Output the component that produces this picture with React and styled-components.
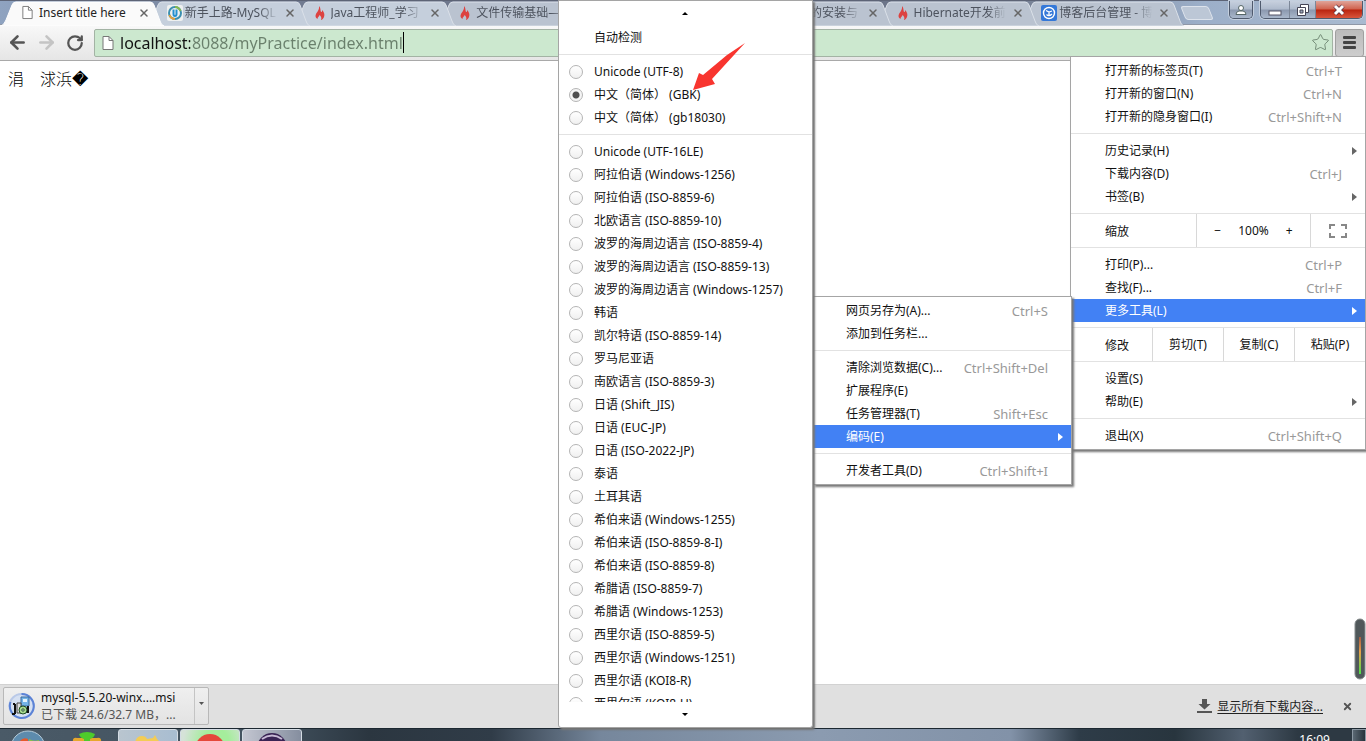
import { useState } from "react";
import styled, { createGlobalStyle, css } from "styled-components";
import { ArrowLeft, ArrowRight, RotateCw, Star, X } from "lucide-react";

const GlobalStyle = createGlobalStyle`
    * {
        box-sizing: border-box;
    }
    body {
        margin: 0;
        overflow: hidden;
        font-family: "Noto Sans", "Noto Sans CJK SC", sans-serif;
        font-size: 12px;
        color: #111;
    }
    button, input {
        font: inherit;
        color: inherit;
    }
`;

const Desktop = styled.div`
    position: relative;
    display: flex;
    flex-direction: column;
    height: 100vh;
    overflow: hidden;
    background: #fff;
`;

/* tab strip */
const TabStrip = styled.header`
    display: flex;
    flex: none;
    height: 25px;
    border-top: 1px solid #5d6476;
    border-bottom: 1px solid #8f97a6;
    background: linear-gradient(90deg, #8fa3c0, #727c92 20%, #666e82 60%, #7c879b 78%, #9cafc9 88%, #a9bad0);
`;
const Tabs = styled.nav`
    display: flex;
    flex: 0 1 1166px;
    min-width: 0;
`;
const Tab = styled.div`
    position: relative;
    z-index: ${({ $order }) => 10 - $order};
    display: flex;
    flex: 1 1 0;
    align-items: center;
    min-width: 0;
    padding-left: 21px;
`;
const TabShape = styled.svg`
    position: absolute;
    left: 0;
    top: 0;
    width: 164px;
    height: 25px;
    z-index: -1;
`;
const TabIcon = styled.span`
    display: flex;
    flex: none;
    width: 18px;
`;
const TabTitle = styled.a`
    flex: 1;
    overflow: hidden;
    white-space: nowrap;
    line-height: 24px;
    color: ${({ $active }) => ($active ? "#222" : "#4d535e")};
    text-decoration: none;
    mask-image: ${({ $active }) => ($active ? "none" : "linear-gradient(90deg, #000 80%, transparent)")};
`;
const IconButton = styled.button`
    display: flex;
    flex: none;
    align-items: center;
    justify-content: center;
    width: 24px;
    height: 24px;
    padding: 0;
    border: 0;
    background: transparent;
    color: ${({ $color }) => $color || "#555"};
`;
const CloseTab = styled(IconButton)`
    width: 14px;
    margin: 0 -5px 0 5px;
`;
const NewTab = styled.button`
    width: 28px;
    height: 14px;
    margin: 5px 0 0 17px;
    padding: 0;
    border: 1px solid #dde3ec;
    border-radius: 3px;
    background: #bcc7d6;
    transform: skewX(22deg);
`;
const WindowControls = styled.div`
    display: flex;
    height: 18px;
    margin-left: auto;
    padding-right: 3px;
`;
const ControlGroup = styled.div`
    display: flex;
    margin-left: 7px;
    overflow: hidden;
    border: 1px solid #4f5a6d;
    border-top: 0;
    border-radius: 0 0 5px 5px;
    box-shadow: 0 0 0 1px #c4cfde;
`;
const Control = styled.button`
    display: flex;
    align-items: center;
    justify-content: center;
    width: ${({ $width }) => $width}px;
    height: 17px;
    padding: 0;
    border: 0;
    border-left: 1px solid #7c8798;
    background: ${({ $danger }) =>
        $danger
            ? "linear-gradient(#e0a499, #d0614d 48%, #b9240f 52%, #d9553c)"
            : "linear-gradient(#c7d0de, #aebacc 48%, #8b98ae 52%, #a9b7cb)"};

    &:first-child {
        border-left: 0;
    }
`;

/* toolbar */
const Toolbar = styled.form`
    display: flex;
    flex: none;
    align-items: center;
    height: 36px;
    padding: 0 2px 0 5px;
    border-bottom: 1px solid #a9a9a9;
    background: linear-gradient(#f8f8f8, #e6e6e6);
`;
const NavButtons = styled.div`
    display: flex;
    gap: 5px;
    width: 89px;
`;
const Omnibox = styled.div`
    display: flex;
    flex: 1;
    align-items: center;
    height: 28px;
    padding: 0 0 0 6px;
    border: 1px solid #a3b3a4;
    border-radius: 2px;
    background: #cce8cf;
`;
const UrlInput = styled.input`
    field-sizing: content;
    margin-left: 5px;
    padding: 0;
    border: 0;
    outline: 0;
    font-size: 16px;
    line-height: 24px;
    background: linear-gradient(90deg, #111 70px, #6a806c 70px);
    background-clip: text;
    -webkit-text-fill-color: transparent;
`;
const Caret = styled.span`
    width: 1px;
    height: 21px;
    margin-right: auto;
    background: #000;
`;
const MenuButton = styled.button`
    display: flex;
    flex-direction: column;
    align-items: center;
    justify-content: center;
    gap: 2px;
    width: 29px;
    height: 28px;
    margin-left: 2px;
    padding: 0;
    border: 1px solid #a0a0a0;
    border-radius: 3px;
    background: linear-gradient(#bcbcbc, #cdcdcd);
`;
const MenuBar = styled.span`
    width: 13px;
    height: 3px;
    border-radius: 1px;
    background: #444;
`;

const Page = styled.main`
    flex: 1;
    padding: 5px 8px;
    font-family: "Noto Sans CJK SC", "DejaVu Sans", sans-serif;
    font-size: 16px;
    font-weight: 300;
    line-height: 24px;
    color: #000;
`;

/* downloads */
const DownloadBar = styled.footer`
    display: flex;
    flex: none;
    align-items: center;
    height: 44px;
    padding: 0 7px 1px 3px;
    border-top: 1px solid #d2d2d2;
    background: #e0e0e0;
`;
const DownloadItem = styled.div`
    display: flex;
    width: 206px;
    height: 38px;
    border: 1px solid #b8b8b8;
    border-radius: 2px;
    background: linear-gradient(#efefef, #e3e3e3);
`;
const DownloadFile = styled.button`
    display: flex;
    flex: 1;
    align-items: center;
    gap: 6px;
    padding: 0 0 0 4px;
    border: 0;
    background: transparent;
    text-align: left;
    line-height: 17px;
    white-space: nowrap;
`;
const DownloadStatus = styled.span`
    display: block;
    color: #555;
`;
const DownloadArrow = styled.button`
    width: 14px;
    padding: 0 0 12px;
    border: 0;
    border-left: 1px solid #c4c4c4;
    background: transparent;
`;
const ShowAll = styled.a`
    display: flex;
    align-items: center;
    gap: 5px;
    margin: 0 12px 0 auto;
    color: #222;
    text-underline-offset: 2px;
`;

/* taskbar */
const Taskbar = styled.div`
    display: flex;
    flex: none;
    height: 13px;
    overflow: hidden;
    border-top: 1px solid #1c2831;
    background: linear-gradient(90deg, #4a5a67, #42525f 20%, #2b3640 27%, #303c48 36%, #76879c 44%, #8b9bb0 60%, #8292a8 74%, #2e3c48 79%, #28353e 86%, #526070 91%, #2d3943 95%);
`;
const Task = styled.button`
    display: flex;
    align-items: flex-start;
    justify-content: center;
    width: ${({ $width }) => $width || 60}px;
    height: 40px;
    margin-right: 2px;
    padding: 0;
    border: ${({ $tint }) => ($tint ? "1px solid #d4dce4" : "0")};
    border-radius: 3px;
    background: ${({ $tint }) => $tint || "transparent"};
`;
const Clock = styled.time`
    margin: 2px 22px 0 auto;
    line-height: 17px;
    color: #fff;
`;
const ShowDesktop = styled.button`
    width: 14px;
    height: 40px;
    padding: 0;
    border: 1px solid #8b98a3;
    background: linear-gradient(90deg, #5a6873, #27323b);
`;
const Meter = styled.svg`
    position: absolute;
    right: 0;
    bottom: 61px;
`;

/* menus */
const Menu = styled.div`
    position: absolute;
    z-index: 20;
    right: ${({ $right }) => $right}px;
    top: ${({ $top }) => $top}px;
    width: ${({ $width }) => $width}px;
    padding: 2px 0;
    border: 1px solid #a5a5a5;
    background: #fff;
    box-shadow: 2px 2px 2px #777;
`;
const Separator = styled.hr`
    height: 1px;
    margin: 5px 0;
    border: 0;
    background: #e2e2e2;
`;
const rowStyle = css`
    display: flex;
    align-items: center;
    width: 100%;
    height: 23px;
    line-height: 22px;
    white-space: nowrap;
`;
const Item = styled.button`
    ${rowStyle}
    padding: 1px ${({ $arrow }) => ($arrow ? 8 : 23)}px 0 ${({ $indent }) => $indent}px;
    border: 0;
    background: ${({ $selected }) => ($selected ? "#4281f4" : "transparent")};
    color: ${({ $selected }) => ($selected ? "#fff" : "#111")};
    text-align: left;
`;
const Shortcut = styled.kbd`
    margin-left: auto;
    font-family: inherit;
    font-size: 13px;
    color: #999;
`;
const ArrowIcon = styled.svg`
    margin-left: auto;
`;
const SplitRow = styled.div`
    display: flex;
    align-items: stretch;
    height: 35px;
    margin: 5px 0;
    border-top: 1px solid #e2e2e2;
    border-bottom: 1px solid #e2e2e2;
    line-height: 35px;
`;
const SplitLabel = styled.span`
    flex: 1;
    padding-left: 34px;
`;
const SplitCell = styled.div`
    display: flex;
    align-items: center;
    justify-content: center;
    gap: 13px;
    width: ${({ $width }) => $width}px;
    border-left: 1px solid #d8d8d8;
`;
const SplitButton = styled.button`
    display: flex;
    padding: 0 4px;
    border: 0;
    background: transparent;
`;

const EncodingMenu = styled(Menu)`
    bottom: 13px;
    display: flex;
    flex-direction: column;
    padding: 0;
    border-radius: 0 0 3px 3px;
`;
const EncodingList = styled.div`
    flex: 1;
    min-height: 0;
    overflow: hidden;
`;
const ScrollButton = styled.button`
    flex: none;
    height: 25px;
    padding: 0 2px 2px 0;
    border: 0;
    background: transparent;
    line-height: 0;
`;
const EncodingRow = styled.label`
    ${rowStyle}
    gap: 11px;
    padding: 1px 0 0 10px;
`;
const Radio = styled.input`
    appearance: none;
    width: 14px;
    height: 14px;
    margin: 0;
    border: 1px solid #b5b5b5;
    border-radius: 50%;
    background: linear-gradient(#fff, #f0f0f0);

    &:checked {
        background: radial-gradient(circle, #4f4f4f 3px, #f4f4f4 4px);
    }
`;
const Pointer = styled.svg`
    position: absolute;
    z-index: 30;
    top: 42px;
    right: 620px;
`;

const tabs = [
    { title: "Insert title here", icon: "page" },
    { title: "新手上路-MySQL", icon: "ring" },
    { title: "Java工程师_学习", icon: "flame" },
    { title: "文件传输基础—", icon: "flame" },
    { title: "", icon: "flame" },
    { title: "MySQL 的安装与", icon: "flame" },
    { title: "Hibernate开发前", icon: "flame" },
    { title: "博客后台管理 - 博", icon: "blog" },
];

const mainMenu = [
    { label: "打开新的标签页(T)", keys: "Ctrl+T" },
    { label: "打开新的窗口(N)", keys: "Ctrl+N" },
    { label: "打开新的隐身窗口(I)", keys: "Ctrl+Shift+N" },
    "-",
    { label: "历史记录(H)", arrow: true },
    { label: "下载内容(D)", keys: "Ctrl+J" },
    { label: "书签(B)", arrow: true },
    "zoom",
    { label: "打印(P)...", keys: "Ctrl+P" },
    { label: "查找(F)...", keys: "Ctrl+F" },
    { label: "更多工具(L)", arrow: true, selected: true },
    "edit",
    { label: "设置(S)" },
    { label: "帮助(E)", arrow: true },
    "-",
    { label: "退出(X)", keys: "Ctrl+Shift+Q" },
];

const toolsMenu = [
    { label: "网页另存为(A)...", keys: "Ctrl+S" },
    { label: "添加到任务栏..." },
    "-",
    { label: "清除浏览数据(C)...", keys: "Ctrl+Shift+Del" },
    { label: "扩展程序(E)" },
    { label: "任务管理器(T)", keys: "Shift+Esc" },
    { label: "编码(E)", arrow: true, selected: true },
    "-",
    { label: "开发者工具(D)", keys: "Ctrl+Shift+I" },
];

const recentEncodings = ["Unicode (UTF-8)", "中文（简体） (GBK)", "中文（简体） (gb18030)"];
const encodings = [
    "Unicode (UTF-16LE)",
    "阿拉伯语 (Windows-1256)",
    "阿拉伯语 (ISO-8859-6)",
    "北欧语言 (ISO-8859-10)",
    "波罗的海周边语言 (ISO-8859-4)",
    "波罗的海周边语言 (ISO-8859-13)",
    "波罗的海周边语言 (Windows-1257)",
    "韩语",
    "凯尔特语 (ISO-8859-14)",
    "罗马尼亚语",
    "南欧语言 (ISO-8859-3)",
    "日语 (Shift_JIS)",
    "日语 (EUC-JP)",
    "日语 (ISO-2022-JP)",
    "泰语",
    "土耳其语",
    "希伯来语 (Windows-1255)",
    "希伯来语 (ISO-8859-8-I)",
    "希伯来语 (ISO-8859-8)",
    "希腊语 (ISO-8859-7)",
    "希腊语 (Windows-1253)",
    "西里尔语 (ISO-8859-5)",
    "西里尔语 (Windows-1251)",
    "西里尔语 (KOI8-R)",
    "西里尔语 (KOI8-U)",
];

const PageIcon = ({ size = 14 }) => (
    <svg width={size} height={size + 2} viewBox="0 0 14 16">
        <path d="M2 1.5h6l4 4v9H2z" fill="#fff" stroke="#777" />
        <path d="M8 1.5v4h4" fill="none" stroke="#777" />
    </svg>
);

const Favicon = ({ name }) => {
    switch (name) {
        case "page":
            return <PageIcon size={13} />;
        case "ring":
            return (
                <svg width="16" height="16" viewBox="0 0 16 16">
                    <rect width="16" height="16" rx="2" fill="#eef0f0" />
                    <circle cx="8" cy="8" r="6" fill="none" stroke="#3b8fb0" strokeWidth="2" />
                    <path d="M2.5 10a6 6 0 0 0 5.5 4" fill="none" stroke="#e8a13a" strokeWidth="2" />
                    <path d="M13.5 6A6 6 0 0 0 8 2" fill="none" stroke="#86b94f" strokeWidth="2" />
                    <path d="M6.5 4.5v4.5q0 2 1.5 2t1.5-2V4.5" fill="none" stroke="#2490d0" strokeWidth="2" />
                </svg>
            );
        case "blog":
            return (
                <svg width="16" height="16" viewBox="0 0 16 16">
                    <rect width="16" height="16" rx="2" fill="#3478d8" />
                    <circle cx="8" cy="8" r="5.5" fill="none" stroke="#fff" strokeWidth="1.4" />
                    <path d="M5 5.5 8 7l3-1M8 7v4M5.5 9.500q2.5 2.5 5.5-.5" fill="none" stroke="#fff" strokeWidth="1.3" />
                </svg>
            );
        default:
            return (
                <svg width="14" height="16" viewBox="0 0 14 16">
                    <path d="M6 1c2 2 1 4 2 6 1 .5 1-1 1-2 2 2 3 4 2 7-.5 1.5-2 3-3 3 1-2 0-4-1.5-5-.5 2-2 2-2 4-2-1-2.5-3-1.500-5S6.500 5 6 1z" fill="#dd4240" />
                </svg>
            );
    }
};

const MenuItems = ({ items, indent }) =>
    items.map((item, index) => {
        switch (item) {
            case "-":
                return <Separator key={index} />;
            case "zoom":
                return (
                    <SplitRow key={index}>
                        <SplitLabel>缩放</SplitLabel>
                        <SplitCell $width={114}>
                            <SplitButton>−</SplitButton>
                            <span>100%</span>
                            <SplitButton>+</SplitButton>
                        </SplitCell>
                        <SplitCell $width={55}>
                            <SplitButton aria-label="全屏">
                                <svg width="18" height="14" viewBox="0 0 18 14">
                                    <path d="M1 5V1h5M12 1h5v4M17 9v4h-5M6 13H1V9" fill="none" stroke="#888" strokeWidth="2" />
                                </svg>
                            </SplitButton>
                        </SplitCell>
                    </SplitRow>
                );
            case "edit":
                return (
                    <SplitRow key={index}>
                        <SplitLabel>修改</SplitLabel>
                        {["剪切(T)", "复制(C)", "粘贴(P)"].map(label => <SplitCell key={label} $width={71}>
                            <SplitButton>{label}</SplitButton>
                        </SplitCell>)}
                    </SplitRow>
                );
            default:
                return (
                    <Item key={index} $indent={indent} $selected={item.selected} $arrow={item.arrow}>
                        {item.label}
                        {item.keys && <Shortcut>{item.keys}</Shortcut>}
                        {item.arrow && <ArrowIcon width="5" height="8" viewBox="0 0 5 8">
                            <path d="M0 0l5 4-5 4z" fill={item.selected ? "#fff" : "#666"} />
                        </ArrowIcon>}
                    </Item>
                );
        }
    });

export default () => {
    const [encoding, setEncoding] = useState("中文（简体） (GBK)");
    const [url, setUrl] = useState("localhost:8088/myPractice/index.html");

    const renderEncoding = name => (
        <EncodingRow key={name}>
            <Radio type="radio" name="encoding" checked={encoding === name} onChange={() => setEncoding(name)} />
            {name}
        </EncodingRow>
    );

    return (
        <Desktop>
            <GlobalStyle />
            <TabStrip>
                <Tabs>
                    {tabs.map((tab, index) => <Tab key={index} $order={index}>
                        <TabShape viewBox="0 0 164 25">
                            <path
                                d="M1 25Q4 24 6 19L12 4Q13 1 16 1H150Q153 1 154 4L160 20Q161 24 164 25z"
                                fill={index === 0 ? "#fafafa" : index < 3 ? "#c5cfdc" : "#bac3d0"}
                                stroke={index === 0 ? "#fff" : "#dbe1e9"}
                            />
                        </TabShape>
                        <TabIcon><Favicon name={tab.icon} /></TabIcon>
                        <TabTitle href="#" $active={index === 0}>{tab.title}</TabTitle>
                        <CloseTab aria-label="关闭标签页" $color="#666"><X size={12} strokeWidth={3} /></CloseTab>
                    </Tab>)}
                </Tabs>
                <NewTab aria-label="新标签页" />
                <WindowControls>
                    <ControlGroup>
                        <Control $width={22} aria-label="用户">
                            <svg width="12" height="12" viewBox="0 0 12 12">
                                <circle cx="6" cy="4" r="2.5" fill="#fff" stroke="#566" />
                                <path d="M1 10.5q0-3 3-3.5h4q3 .5 3 3.5z" fill="#fff" stroke="#566" />
                            </svg>
                        </Control>
                    </ControlGroup>
                    <ControlGroup>
                        <Control $width={28} aria-label="最小化">
                            <svg width="14" height="14" viewBox="0 0 14 14"><rect x="1" y="8" width="12" height="4" fill="#fff" stroke="#556" /></svg>
                        </Control>
                        <Control $width={26} aria-label="还原">
                            <svg width="14" height="14" viewBox="0 0 14 14">
                                <path d="M4.5 1.5h8v8h-8z" fill="#fff" stroke="#445" />
                                <path d="M1.5 4.5h8v8h-8z" fill="#fff" stroke="#445" />
                                <path d="M4 7h3v3H4z" fill="#99a5b8" stroke="#445" />
                            </svg>
                        </Control>
                        <Control $width={47} $danger aria-label="关闭">
                            <svg width="14" height="12" viewBox="0 0 14 12">
                                <path d="M3 2l8 8M11 2l-8 8" stroke="#534" strokeWidth="4.5" />
                                <path d="M3 2l8 8M11 2l-8 8" stroke="#fff" strokeWidth="3" />
                            </svg>
                        </Control>
                    </ControlGroup>
                </WindowControls>
            </TabStrip>

            <Toolbar onSubmit={e => e.preventDefault()}>
                <NavButtons>
                    <IconButton type="button" aria-label="后退"><ArrowLeft size={21} strokeWidth={3} /></IconButton>
                    <IconButton type="button" aria-label="前进" $color="#c4c4c4"><ArrowRight size={21} strokeWidth={3} /></IconButton>
                    <IconButton type="button" aria-label="重新加载"><RotateCw size={18} strokeWidth={3} /></IconButton>
                </NavButtons>
                <Omnibox>
                    <PageIcon />
                    <UrlInput aria-label="地址" value={url} onChange={e => setUrl(e.target.value)} />
                    <Caret />
                    <IconButton type="button" aria-label="收藏" $color="#5e7562"><Star size={19} strokeWidth={1} /></IconButton>
                </Omnibox>
                <MenuButton type="button" aria-label="菜单"><MenuBar /><MenuBar /><MenuBar /></MenuButton>
            </Toolbar>

            <Page>涓　浗浜�</Page>

            <DownloadBar>
                <DownloadItem>
                    <DownloadFile>
                        <svg width="27" height="28" viewBox="0 0 27 28">
                            <circle cx="13.5" cy="14" r="12" fill="#d5e0f2" stroke="#b9c9e8" strokeWidth="2" />
                            <path d="M13.5 2a12 12 0 1 1-11 8" fill="none" stroke="#5c83d6" strokeWidth="2" />
                            <path d="M13 5h8v9h-8z" fill="#74b4e8" stroke="#3b6a9c" />
                            <path d="M15 7h4v3h-4z" fill="#e4f3fc" />
                            <path d="M7 12v10M7 12H5M7 22H4M20 14v6h-4" fill="none" stroke="#111" strokeWidth="2" />
                            <path d="M9 11h4v10H9z" fill="#ddd" stroke="#444" />
                            <circle cx="15" cy="18" r="4" fill="#a8d98f" stroke="#1f4f25" />
                            <circle cx="15" cy="18" r="1.2" fill="#fff" stroke="#1f4f25" />
                        </svg>
                        <span>
                            mysql-5.5.20-winx....msi
                            <DownloadStatus>已下载 24.6/32.7 MB，...</DownloadStatus>
                        </span>
                    </DownloadFile>
                    <DownloadArrow aria-label="下载选项">
                        <svg width="5" height="3" viewBox="0 0 5 3"><path d="M0 0h5L2.500 3z" fill="#555" /></svg>
                    </DownloadArrow>
                </DownloadItem>
                <ShowAll href="#">
                    <svg width="15" height="14" viewBox="0 0 15 14">
                        <path d="M5 0h5v5h3.5l-6 5.5L1.5 5H5zM0 12h15v2H0z" fill="#555" />
                    </svg>
                    显示所有下载内容...
                </ShowAll>
                <IconButton aria-label="关闭下载栏"><X size={11} strokeWidth={4} /></IconButton>
            </DownloadBar>

            <Taskbar>
                <Task $width={55} aria-label="开始">
                    <svg width="36" height="36" viewBox="0 0 36 36">
                        <circle cx="18" cy="19" r="17" fill="#5d8bad" stroke="#b4cad8" />
                        <path d="M8 15q4-8 10-5v9H8z" fill="#e4592b" />
                        <path d="M19 10q5 3 10 1v8H19z" fill="#8abf46" />
                    </svg>
                </Task>
                <Task $width={59} aria-label="安全卫士">
                    <svg width="30" height="36" viewBox="0 0 30 36">
                        <path d="M5 9q-5-1-4 5v6h28v-6q1-6-4-5z" fill="#e7a72c" />
                        <path d="M7 5q8-4 16 0-1 4-5 5v8h-6v-8q-4-1-5-5z" fill="#4ecb2b" />
                    </svg>
                </Task>
                <Task $tint="linear-gradient(90deg, #b9c5cf, #a8bdd1)" aria-label="文件夹">
                    <svg width="30" height="36" viewBox="0 0 30 36"><path d="M2 13q1-7 7-7 4 0 5 3l6-1 2-3 2 4 5 5v12H2z" fill="#f3cc55" /></svg>
                </Task>
                <Task $tint="radial-gradient(circle at 60% 12px, #a5ed9c 30%, #d5e2d8 75%)" aria-label="浏览器">
                    <svg width="30" height="36" viewBox="0 0 30 36"><circle cx="15" cy="19" r="15" fill="#e5483a" /></svg>
                </Task>
                <Task $tint="linear-gradient(90deg, #c3c6d1, #858e9f)" aria-label="Eclipse">
                    <svg width="32" height="36" viewBox="0 0 32 36">
                        <circle cx="16" cy="18" r="15" fill="#392354" />
                        <path d="M6 9q10-7 20 0" fill="none" stroke="#c8bad6" strokeWidth="2" />
                    </svg>
                </Task>
                <Clock>16:09</Clock>
                <ShowDesktop aria-label="显示桌面" />
            </Taskbar>

            <Meter width="12" height="62" viewBox="0 0 12 62">
                <defs>
                    <linearGradient id="level" x2="0" y2="1">
                        <stop offset="0" stopColor="#a35c45" />
                        <stop offset=".4" stopColor="#e8a04a" />
                        <stop offset="1" stopColor="#4ce04a" />
                    </linearGradient>
                </defs>
                <rect x="1" y="1" width="10" height="60" rx="5" fill="#50585a" stroke="#858b8c" />
                <rect x="5" y="19" width="2" height="37" fill="url(#level)" />
            </Meter>

            <Menu $right={0} $top={56} $width={296}>
                <MenuItems items={mainMenu} indent={34} />
            </Menu>
            <Menu $right={294} $top={296} $width={259}>
                <MenuItems items={toolsMenu} indent={32} />
            </Menu>
            <EncodingMenu $right={553} $top={0} $width={255}>
                <ScrollButton aria-label="向上">
                    <svg width="6" height="3" viewBox="0 0 6 3"><path d="M0 3h6L3 0z" fill="#000" /></svg>
                </ScrollButton>
                <EncodingList>
                    <Item $indent={35}>自动检测</Item>
                    <Separator />
                    {recentEncodings.map(renderEncoding)}
                    <Separator />
                    {encodings.map(renderEncoding)}
                </EncodingList>
                <ScrollButton aria-label="向下">
                    <svg width="6" height="3" viewBox="0 0 6 3"><path d="M0 0h6L3 3z" fill="#000" /></svg>
                </ScrollButton>
            </EncodingMenu>

            <Pointer width="54" height="50" viewBox="0 0 54 50">
                <path d="M53 1L20 37l3 5L1 48 7 31l4 2L35 13z" fill="#f8352f" />
            </Pointer>
        </Desktop>
    );
}
